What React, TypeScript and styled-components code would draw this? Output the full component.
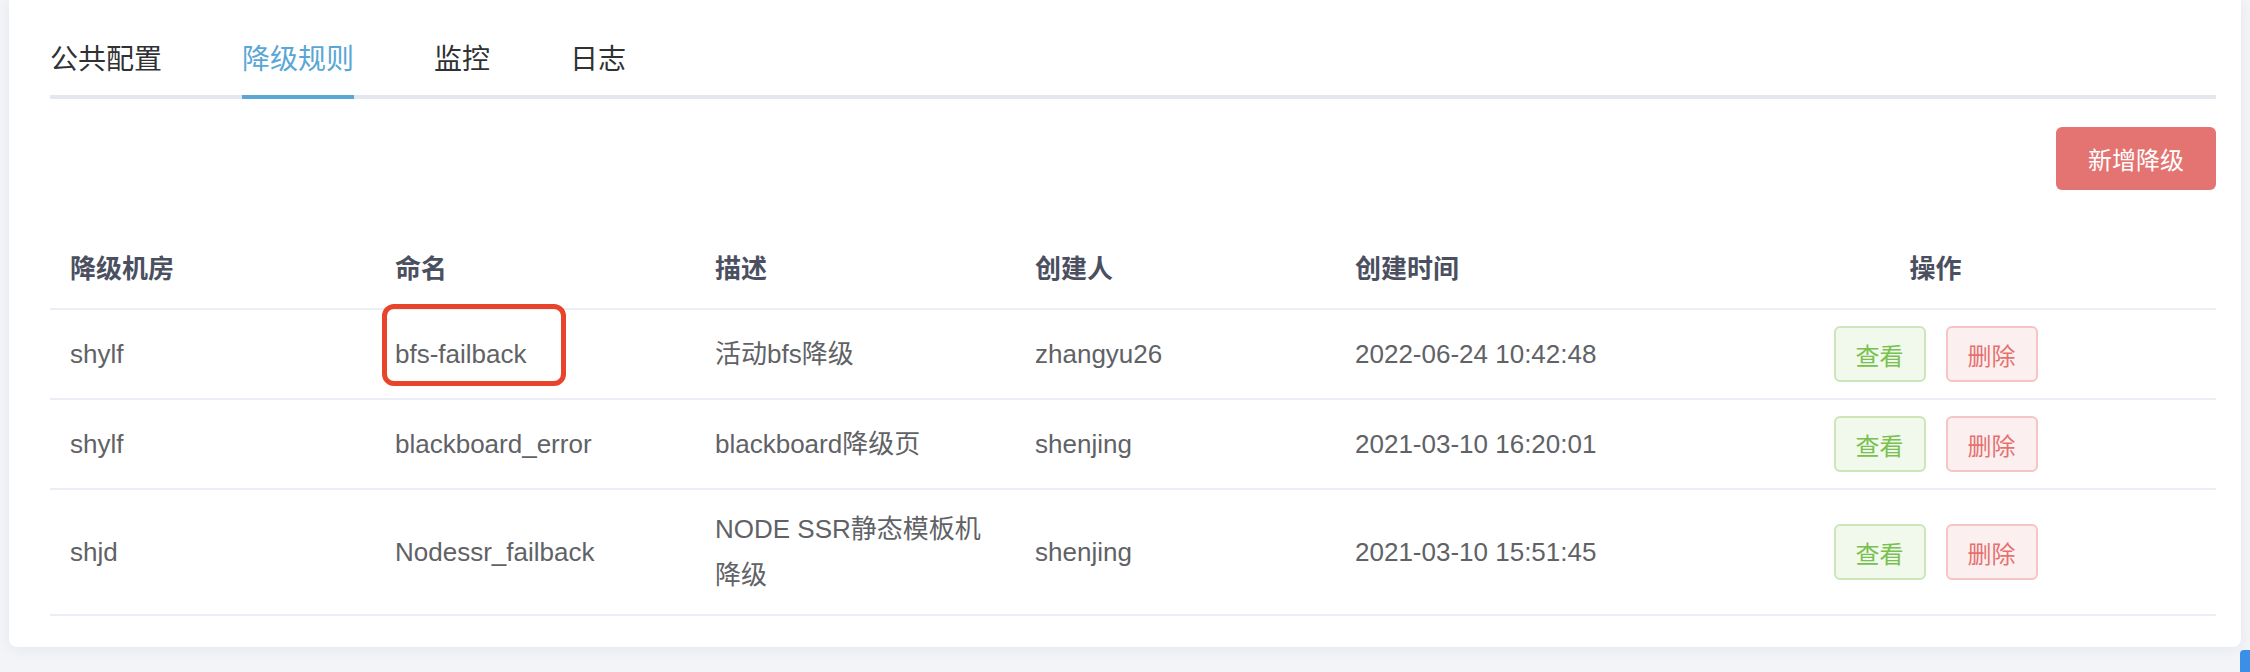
import React from "react";
import styled, { createGlobalStyle, css } from "styled-components";

const GlobalStyle = createGlobalStyle`
  html, body {
    margin: 0;
    padding: 0;
    height: 100%;
    overflow: hidden;
    background: #f3f4f8;
  }
  body {
    font-family: "Liberation Sans", "Noto Sans CJK SC", sans-serif;
  }
`;

const Page = styled.div`
  padding: 0 0 0 9px;
`;

const Card = styled.div`
  width: 2232px;
  box-sizing: border-box;
  background: #ffffff;
  border-radius: 0 0 8px 8px;
  box-shadow: 0 2px 14px rgba(30, 40, 70, 0.06);
  padding: 21px 25px 31px 41px;
`;

const TabBar = styled.div`
  display: flex;
  gap: 80px;
  border-bottom: 4px solid #e4e7ed;
`;

const Tab = styled.div<{ $active?: boolean }>`
  position: relative;
  box-sizing: border-box;
  height: 74px;
  padding-top: 4px;
  line-height: 70px;
  font-size: 28px;
  color: ${(p) => (p.$active ? "#5aa7d5" : "#303133")};
  cursor: pointer;
  ${(p) =>
    p.$active &&
    css`
      &::after {
        content: "";
        position: absolute;
        left: 0;
        right: 0;
        bottom: -4px;
        height: 4px;
        background: #5aa7d5;
      }
    `}
`;

const Toolbar = styled.div`
  display: flex;
  justify-content: flex-end;
  margin-top: 28px;
`;

const AddButton = styled.button`
  width: 160px;
  height: 63px;
  border: none;
  border-radius: 6px;
  background: #e37471;
  color: #ffffff;
  font-family: inherit;
  font-size: 24px;
  cursor: pointer;
`;

const Table = styled.table`
  width: 100%;
  margin-top: 40px;
  border-collapse: collapse;
  table-layout: fixed;
`;

const HeadCell = styled.th<{ $center?: boolean }>`
  padding: 16px 20px;
  border-bottom: 2px solid #ebeef5;
  text-align: ${(p) => (p.$center ? "center" : "left")};
  font-weight: 600;
  font-size: 26px;
  line-height: 46px;
  color: #4b5060;
`;

const Cell = styled.td`
  padding: 16px 20px;
  border-bottom: 2px solid #ebeef5;
  font-size: 26px;
  line-height: 46px;
  color: #606266;
  vertical-align: middle;
  word-break: break-all;
`;

const Actions = styled.div`
  display: flex;
  justify-content: center;
  align-items: center;
  gap: 20px;
`;

const ActionButton = styled.button<{ $kind: "view" | "delete" }>`
  width: 92px;
  height: 56px;
  box-sizing: border-box;
  padding: 0;
  border-radius: 6px;
  border: 2px solid ${(p) => (p.$kind === "view" ? "#cbe7b9" : "#f6c4c4")};
  background: ${(p) => (p.$kind === "view" ? "#f1f8ec" : "#fcefef")};
  color: ${(p) => (p.$kind === "view" ? "#78c04f" : "#e5716f")};
  font-family: inherit;
  font-size: 24px;
  cursor: pointer;
`;

const Marked = styled.span`
  position: relative;
  &::after {
    content: "";
    position: absolute;
    left: -13px;
    right: -39px;
    top: -35px;
    bottom: -17px;
    border: 5px solid #e8442c;
    border-radius: 12px;
    pointer-events: none;
  }
`;

const FloatingButton = styled.div`
  position: fixed;
  left: 2240px;
  top: 650px;
  width: 40px;
  height: 40px;
  border-radius: 4px;
  background: #3b8fe6;
`;

type Row = {
  room: string;
  name: string;
  desc: string;
  creator: string;
  time: string;
  marked?: boolean;
};

const rows: Row[] = [
  {
    room: "shylf",
    name: "bfs-failback",
    desc: "活动bfs降级",
    creator: "zhangyu26",
    time: "2022-06-24 10:42:48",
    marked: true,
  },
  {
    room: "shylf",
    name: "blackboard_error",
    desc: "blackboard降级页",
    creator: "shenjing",
    time: "2021-03-10 16:20:01",
  },
  {
    room: "shjd",
    name: "Nodessr_failback",
    desc: "NODE SSR静态模板机降级",
    creator: "shenjing",
    time: "2021-03-10 15:51:45",
  },
];

const tabs = ["公共配置", "降级规则", "监控", "日志"];

export default function App() {
  return (
    <>
      <GlobalStyle />
      <Page>
        <Card>
          <TabBar>
            {tabs.map((t) => (
              <Tab key={t} $active={t === "降级规则"}>
                {t}
              </Tab>
            ))}
          </TabBar>
          <Toolbar>
            <AddButton>新增降级</AddButton>
          </Toolbar>
          <Table>
            <colgroup>
              <col style={{ width: 325 }} />
              <col style={{ width: 320 }} />
              <col style={{ width: 320 }} />
              <col style={{ width: 320 }} />
              <col style={{ width: 320 }} />
              <col />
            </colgroup>
            <thead>
              <tr>
                <HeadCell>降级机房</HeadCell>
                <HeadCell>命名</HeadCell>
                <HeadCell>描述</HeadCell>
                <HeadCell>创建人</HeadCell>
                <HeadCell>创建时间</HeadCell>
                <HeadCell $center>操作</HeadCell>
              </tr>
            </thead>
            <tbody>
              {rows.map((r, i) => (
                <tr key={i}>
                  <Cell>{r.room}</Cell>
                  <Cell>{r.marked ? <Marked>{r.name}</Marked> : r.name}</Cell>
                  <Cell>{r.desc}</Cell>
                  <Cell>{r.creator}</Cell>
                  <Cell>{r.time}</Cell>
                  <Cell>
                    <Actions>
                      <ActionButton $kind="view">查看</ActionButton>
                      <ActionButton $kind="delete">删除</ActionButton>
                    </Actions>
                  </Cell>
                </tr>
              ))}
            </tbody>
          </Table>
        </Card>
      </Page>
      <FloatingButton />
    </>
  );
}
